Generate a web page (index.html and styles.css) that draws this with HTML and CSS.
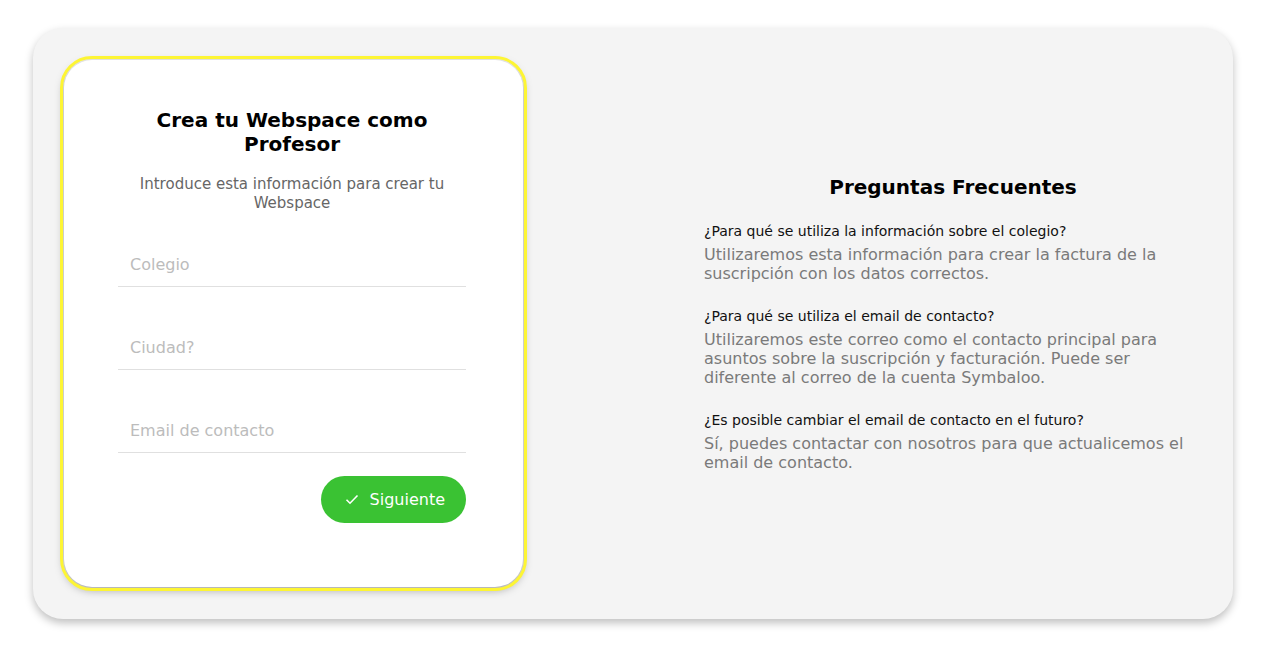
FILE: index.html
```html
<html>

<head>
    <title>Crea tu Webspace</title>
    <link rel="stylesheet" href="styles.css">
</head>

<body>
    <div class="panel">
        <div class="left">
            <div class="card">
                <h1 class="title">Crea tu Webspace como Profesor</h1>
                <p class="subtitle">Introduce esta información para crear tu Webspace</p>
                <input type="text" class="field" placeholder="Colegio">
                <input type="text" class="field" placeholder="Ciudad?">
                <input type="text" class="field" placeholder="Email de contacto">
                <div class="actions">
                    <button class="next">
                        <svg width="14" height="11" viewBox="0 0 14 11"><path d="M1.5 5.8 L5 9.2 L12.5 1.5" fill="none" stroke="#fff" stroke-width="1.6"/></svg>
                        Siguiente
                    </button>
                </div>
            </div>
        </div>
        <div class="right">
            <div class="faq">
                <h2 class="faq-title">Preguntas Frecuentes</h2>
                <div class="q">¿Para qué se utiliza la información sobre el colegio?</div>
                <div class="a">Utilizaremos esta información para crear la factura de la suscripción con los datos correctos.</div>
                <div class="q">¿Para qué se utiliza el email de contacto?</div>
                <div class="a">Utilizaremos este correo como el contacto principal para asuntos sobre la suscripción y facturación. Puede ser diferente al correo de la cuenta Symbaloo.</div>
                <div class="q">¿Es posible cambiar el email de contacto en el futuro?</div>
                <div class="a">Sí, puedes contactar con nosotros para que actualicemos el email de contacto.</div>
            </div>
        </div>
    </div>
</body>

</html>
```

FILE: styles.css
```css
* {
    box-sizing: border-box;
}

body {
    margin: 0;
    background-color: #fff;
    font-family: "DejaVu Sans", sans-serif;
}

.panel {
    display: flex;
    width: 1200px;
    height: 591px;
    margin: 28px 0 0 33px;
    background-color: #f4f4f4;
    border-radius: 30px;
    box-shadow: 0 4px 8px rgba(0, 0, 0, 0.25);
}

.left {
    padding: 32px 0 0 31px;
}

.card {
    width: 459px;
    height: 527px;
    padding: 48px 57px 0 54px;
    background-color: #fff;
    border-radius: 28px;
    box-shadow: 0 3px 10px rgba(0, 0, 0, 0.35);
    outline: 3px solid #fdf534;
    outline-offset: 1px;
    display: flex;
    flex-direction: column;
}

.title {
    margin: 0;
    font-size: 20px;
    line-height: 24px;
    text-align: center;
    color: #000;
    padding: 0 20px;
}

.subtitle {
    margin: 19px 0 0;
    font-size: 15px;
    line-height: 19px;
    text-align: center;
    color: #666;
    padding: 0 10px;
}

.field {
    display: block;
    width: 348px;
    height: 44px;
    margin-top: 39px;
    padding: 0 12px;
    border: none;
    border-bottom: 1px solid #e0e0e0;
    background: transparent;
    font-family: inherit;
    font-size: 16px;
    color: #333;
    outline: none;
}

.field:first-of-type {
    margin-top: 30px;
}

.field::placeholder {
    color: #bcbcbc;
}

.actions {
    display: flex;
    justify-content: flex-end;
    margin-top: 23px;
}

.next {
    display: flex;
    align-items: center;
    gap: 11px;
    height: 47px;
    padding: 0 21px 0 24px;
    border: none;
    border-radius: 24px;
    background-color: #3ac233;
    color: #fff;
    font-family: inherit;
    font-size: 16px;
}

.right {
    flex: 1;
    display: flex;
    align-items: center;
    padding-left: 181px;
}

.faq {
    width: 498px;
}

.faq-title {
    margin: 0 0 23px;
    text-align: center;
    font-size: 20px;
    line-height: 24px;
    color: #000;
}

.q {
    font-size: 14px;
    line-height: 18px;
    color: #111;
}

.a {
    margin: 5px 0 24px;
    font-size: 16px;
    line-height: 19px;
    color: #7a7a7a;
}

.a:last-child {
    margin-bottom: 0;
}
```
